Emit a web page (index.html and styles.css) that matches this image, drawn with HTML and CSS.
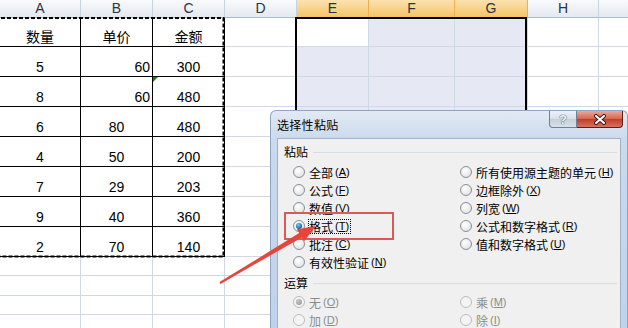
FILE: index.html
```html
<html>
    <head>
        <link rel="stylesheet" href="styles.css">
    </head>
    <body>

        <!--Worksheet-->
        <div class="sheet">
            <div class="hd">A</div><div class="hd">B</div><div class="hd">C</div><div class="hd">D</div><div class="hd hs">E</div><div class="hd hs">F</div><div class="hd hs">G</div><div class="hd">H</div><div class="hd"></div>

            <div class="t">数量</div><div class="t">单价</div><div class="t">金额</div><div></div><div></div><div class="s"></div><div class="s"></div><div></div><div></div>
            <div class="t">5</div><div class="t r">60</div><div class="t">300</div><div></div><div class="s"></div><div class="s"></div><div class="s"></div><div></div><div></div>
            <div class="t">8</div><div class="t r">60</div><div class="t err">480</div><div></div><div class="s"></div><div class="s"></div><div class="s"></div><div></div><div></div>
            <div class="t">6</div><div class="t">80</div><div class="t">480</div><div></div><div class="s"></div><div class="s"></div><div class="s"></div><div></div><div></div>
            <div class="t">4</div><div class="t">50</div><div class="t">200</div><div></div><div class="s"></div><div class="s"></div><div class="s"></div><div></div><div></div>
            <div class="t">7</div><div class="t">29</div><div class="t">203</div><div></div><div class="s"></div><div class="s"></div><div class="s"></div><div></div><div></div>
            <div class="t">9</div><div class="t">40</div><div class="t">360</div><div></div><div class="s"></div><div class="s"></div><div class="s"></div><div></div><div></div>
            <div class="t">2</div><div class="t">70</div><div class="t">140</div><div></div><div class="s"></div><div class="s"></div><div class="s"></div><div></div><div></div>

            <div></div><div></div><div></div><div></div><div class="s"></div><div class="s"></div><div class="s"></div><div></div><div></div>
            <div></div><div></div><div></div><div></div><div class="s"></div><div class="s"></div><div class="s"></div><div></div><div></div>
            <div></div><div></div><div></div><div></div><div class="s"></div><div class="s"></div><div class="s"></div><div></div><div></div>
            <div class="last"></div><div class="last"></div><div class="last"></div><div class="last"></div><div class="s last"></div><div class="s last"></div><div class="s last"></div><div class="last"></div><div class="last"></div>
        </div>

        <!--Copy marquee around A1:C8-->
        <svg class="marquee" width="628" height="328">
            <rect x="-5" y="18" width="228.5" height="238.5" fill="none" stroke="#000" stroke-width="2" stroke-dasharray="4 2"/>
        </svg>

        <!--Selected range E1:G-->
        <div class="selection"></div>

        <!--Paste special dialog-->
        <div class="dialog">
            <div class="titlebar">
                <span class="title">选择性粘贴</span>
                <div class="caption_buttons">
                    <span class="btn_help">?</span>
                    <span class="btn_close">
                        <svg width="14" height="11" viewBox="0 0 14 11">
                            <path d="M3 2 L11 9 M11 2 L3 9" stroke="#4a1a16" stroke-width="4" stroke-linecap="round"/>
                            <path d="M3 2 L11 9 M11 2 L3 9" stroke="#fff" stroke-width="2" stroke-linecap="round"/>
                        </svg>
                    </span>
                </div>
            </div>

            <div class="panel">
                <div class="group_label">粘贴</div>
                <div class="options">
                    <div class="opt"><span class="radio"></span>全部<span class="key">(<u>A</u>)</span></div>
                    <div class="opt"><span class="radio"></span>所有使用源主题的单元<span class="key">(<u>H</u>)</span></div>
                    <div class="opt"><span class="radio"></span>公式<span class="key">(<u>F</u>)</span></div>
                    <div class="opt"><span class="radio"></span>边框除外<span class="key">(<u>X</u>)</span></div>
                    <div class="opt"><span class="radio"></span>数值<span class="key">(<u>V</u>)</span></div>
                    <div class="opt"><span class="radio"></span>列宽<span class="key">(<u>W</u>)</span></div>
                    <div class="opt"><span class="radio checked"></span><span class="focus">格式<span class="key">(<u>T</u>)</span></span></div>
                    <div class="opt"><span class="radio"></span>公式和数字格式<span class="key">(<u>R</u>)</span></div>
                    <div class="opt"><span class="radio"></span>批注<span class="key">(<u>C</u>)</span></div>
                    <div class="opt"><span class="radio"></span>值和数字格式<span class="key">(<u>U</u>)</span></div>
                    <div class="opt"><span class="radio"></span>有效性验证<span class="key">(<u>N</u>)</span></div>
                </div>

                <div class="group_label">运算</div>
                <div class="options ops disabled">
                    <div class="opt"><span class="radio checked"></span>无<span class="key">(<u>O</u>)</span></div>
                    <div class="opt"><span class="radio"></span>乘<span class="key">(<u>M</u>)</span></div>
                    <div class="opt"><span class="radio"></span>加<span class="key">(<u>D</u>)</span></div>
                    <div class="opt"><span class="radio"></span>除<span class="key">(<u>I</u>)</span></div>
                </div>
            </div>
        </div>

        <!--Annotation: red box and arrow-->
        <div class="highlight"></div>
        <svg class="arrow" width="628" height="328">
            <polygon points="219.5,282.1 299.2,233.1 296.9,229.2 316,226 304.1,241.2 301.8,237.4 220.5,283.9" fill="#e8453a"/>
        </svg>

    </body>
</html>
```

FILE: styles.css
```css
html,body{
    border:0;
    margin:0;
    padding:0;
}

body{
    width: 628px;
    height: 328px;
    overflow: hidden;
    position: relative;
    background: #fff;
    font-family: "Liberation Sans", "Noto Sans CJK SC", sans-serif;
}

/* worksheet grid */
.sheet{
    display: grid;
    grid-template-columns: 81px 72px 72px 72px 72px 86px 73px 71px 29px;
    grid-template-rows: 18px 29px repeat(7, 30px) 19px 20px 19px 13px;
}

.sheet div{
    box-sizing: border-box;
    border-right: 1px solid #d0d7e5;
    border-bottom: 1px solid #d0d7e5;
    display: flex;
    align-items: flex-end;
    justify-content: center;
    font-size: 14px;
    line-height: 17px;
    color: #000;
}

.sheet div:nth-child(9n){
    border-right: none;
}

.sheet .last{
    border-bottom: none;
}

.sheet .hd{
    align-items: center;
    background: linear-gradient(#f9fafc, #e4e9f0);
    border-right-color: #c9d2dd;
    border-bottom-color: #a9bccf;
    color: #2b3440;
}

.sheet .hs{
    background: linear-gradient(#fbe2b0, #f4c468);
    border-right-color: #eeb04f;
    border-bottom-color: #e9a23c;
}

.sheet .t{
    border-right-color: #000;
    border-bottom-color: #000;
}

.sheet .s{
    background: #e6e9f3;
}

.sheet .r{
    justify-content: flex-end;
    padding-right: 2px;
}

.sheet .err{
    position: relative;
}

.sheet .err::before{
    content: "";
    position: absolute;
    left: 0;
    top: 0;
    border-top: 5px solid #1e7a1e;
    border-right: 5px solid transparent;
}

.marquee, .arrow{
    position: absolute;
    left: 0;
    top: 0;
    pointer-events: none;
}

.selection{
    position: absolute;
    left: 295px;
    top: 17px;
    width: 232px;
    height: 311px;
    box-sizing: border-box;
    border: 2px solid #000;
    border-bottom: none;
}

/* dialog */
.dialog{
    position: absolute;
    left: 270px;
    top: 110px;
    width: 358px;
    height: 218px;
    box-sizing: border-box;
    border: 1px solid #8ea4c1;
    border-bottom: none;
    border-radius: 6px 6px 0 0;
    background: linear-gradient(#e2eaf4, #cbdaec 28px, #bed2ea);
    font-family: "Noto Sans CJK SC", sans-serif;
    font-size: 12px;
    color: #000;
    overflow: hidden;
}

.titlebar{
    height: 27px;
    display: flex;
    align-items: center;
    padding-left: 6px;
    position: relative;
}

.title{
    font-size: 12px;
    letter-spacing: 0.3px;
}

.caption_buttons{
    position: absolute;
    top: 0;
    right: 4px;
    display: flex;
}

.btn_help, .btn_close{
    height: 17px;
    box-sizing: border-box;
    display: flex;
    align-items: center;
    justify-content: center;
}

.btn_help{
    width: 28px;
    border: 1px solid #6f8096;
    border-top: none;
    border-radius: 0 0 0 4px;
    background: linear-gradient(#eef2f7, #d8e0e9 50%, #c4cfdb 51%, #d9e1ea);
    font-family: "Liberation Sans", sans-serif;
    font-weight: bold;
    font-size: 13px;
    color: #f4f6f9;
    text-shadow: 0 0 1px #3e4b5b, 0 0 1px #3e4b5b;
}

.btn_close{
    width: 46px;
    border: 1px solid #5c2019;
    border-top: none;
    border-left: none;
    border-radius: 0 0 4px 0;
    background: linear-gradient(#eaa897, #d4644f 50%, #c13b2a 51%, #d6735d);
}

.panel{
    margin-left: 6px;
    width: 344px;
    height: 190px;
    box-sizing: border-box;
    border: 1px solid #9fb2c9;
    border-bottom: none;
    background: #f0f0f0;
    padding: 5px 0 0 6px;
    overflow: hidden;
}

.group_label{
    display: flex;
    align-items: center;
    line-height: 16px;
    margin-right: 3px;
}

.group_label::after{
    content: "";
    flex: 1;
    height: 1px;
    margin-left: 5px;
    background: #d8dde3;
}

.options{
    display: grid;
    grid-template-columns: 167px 1fr;
    grid-auto-rows: 18px;
    padding-left: 9px;
    margin-top: 3px;
    margin-bottom: 4px;
}

.options.ops{
    margin-top: 2px;
}

.opt{
    display: flex;
    align-items: center;
    white-space: nowrap;
}

.radio{
    width: 12px;
    height: 12px;
    box-sizing: border-box;
    border-radius: 50%;
    border: 1px solid #8a9099;
    background: radial-gradient(circle at 40% 35%, #fff, #e4e6e9 70%, #cfd3d8);
    margin-right: 4px;
    position: relative;
}

.radio.checked::after{
    content: "";
    position: absolute;
    left: 2px;
    top: 2px;
    width: 6px;
    height: 6px;
    border-radius: 50%;
    background: radial-gradient(circle at 40% 35%, #7fc6f0, #1f6fae 60%, #123f66);
}

.key{
    font-family: "Liberation Sans", sans-serif;
    font-size: 11px;
    margin-left: 2px;
}

.focus{
    display: flex;
    align-items: center;
    outline: 1px dotted #000;
    padding: 0 1px 0 0;
    line-height: 13px;
}

.disabled .opt{
    color: #8c8c8c;
}

.disabled .radio{
    border-color: #b9bcc0;
    background: #f4f4f4;
}

.disabled .radio.checked::after{
    background: radial-gradient(circle at 40% 35%, #c8c8c8, #8e8e8e);
}

/* annotation */
.highlight{
    position: absolute;
    left: 284px;
    top: 212px;
    width: 110px;
    height: 28px;
    box-sizing: border-box;
    border: 2px solid #dc5a55;
}
```
